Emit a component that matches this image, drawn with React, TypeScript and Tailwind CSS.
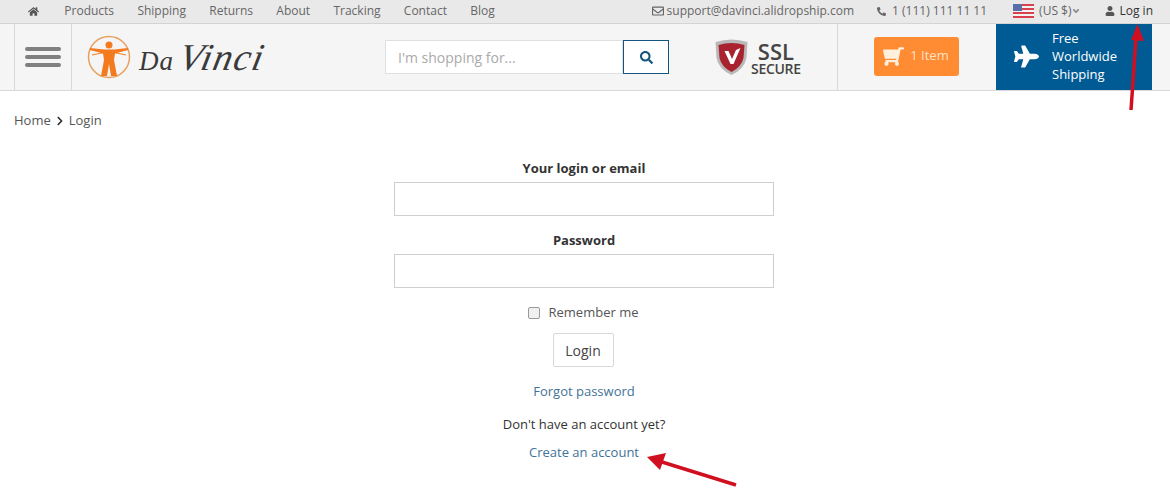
import { FaAngleDown, FaChevronRight, FaHome, FaPhone, FaPlane, FaRegEnvelope, FaSearch, FaShoppingCart, FaUser } from "react-icons/fa";

const navLinks = ["Products", "Shipping", "Returns", "About", "Tracking", "Contact", "Blog"];

function UsFlag() {
  return (
    <svg width="21" height="14" viewBox="0 0 21 14">
      <rect width="21" height="14" fill="#f3f3f3" />
      <rect width="21" height="2" fill="#d9414e" />
      <rect y="4" width="21" height="2" fill="#d9414e" />
      <rect y="8" width="21" height="2" fill="#d9414e" />
      <rect y="12" width="21" height="2" fill="#d9414e" />
      <rect width="9" height="7" fill="#5a6fa8" />
    </svg>
  );
}

function Vitruvian() {
  return (
    <svg width="44" height="44" viewBox="0 0 44 44">
      <circle cx="22" cy="22" r="20.5" fill="none" stroke="#e8a060" strokeWidth="1.5" />
      <path d="M3 13 L17 14.5 L27 14.5 L41 13 L41 15 L28 18.5 L27 25 L30 41 L24 41 L22 29 L20 41 L14 41 L17 25 L16 18.5 L3 15 Z" fill="#f47a1f" />
      <circle cx="22" cy="10" r="3.5" fill="#f47a1f" />
      <path d="M5 20 L17 17.5 M39 20 L27 17.5" stroke="#f47a1f" strokeWidth="1" />
    </svg>
  );
}

function Shield() {
  return (
    <svg width="37" height="38" viewBox="0 0 36 38">
      <path d="M2 4 Q18 -1 34 4 L33 20 Q31 31 18 37 Q5 31 3 20 Z" fill="#b9b9b9" />
      <path d="M5 7 Q18 3 31 7 L30 20 Q28 29 18 34 Q8 29 6 20 Z" fill="#a8232f" />
      <path d="M11 13 L17 26 L20 26 L27 10 L22.5 12 L18.5 21 L15 13 Z" fill="#ffffff" />
    </svg>
  );
}

function Arrows() {
  return (
    <svg className="absolute left-0 top-0 pointer-events-none" width="1170" height="503" viewBox="0 0 1170 503">
      <path d="M1131 110 L1136 38" stroke="#d01020" strokeWidth="3.5" fill="none" />
      <path d="M1137.5 24 L1144 41 L1131 40 Z" fill="#d01020" />
      <path d="M736 485 L662 462" stroke="#d01020" strokeWidth="3.5" fill="none" />
      <path d="M647 457 L666 453 L660 470 Z" fill="#d01020" />
    </svg>
  );
}

export default function App() {
  return (
    <div className="relative h-[503px] w-[1170px] overflow-hidden bg-white font-['Open_Sans',sans-serif] text-[13px] text-[#333]">
      <div className="flex h-6 items-center justify-between border-b border-[#d4d4d4] bg-[#e9e9e9] pb-px pl-[28px] pr-[17px] text-[12px] text-[#666]">
        <div className="flex items-center gap-[23.3px]">
          <FaHome className="mr-[2px] text-[11px] text-[#555]" />
          {navLinks.map((link) => (
            <a key={link} href="#">{link}</a>
          ))}
        </div>
        <div className="flex items-center">
          <FaRegEnvelope className="mr-[3px] text-[12px]" />
          <span>support@davinci.alidropship.com</span>
          <FaPhone className="ml-[23px] mr-[6px] text-[9px] -scale-x-100" />
          <span>1 (111) 111 11 11</span>
          <span className="ml-[26px] mr-[5px]"><UsFlag /></span>
          <span>(US $)</span>
          <FaAngleDown className="text-[10px] text-[#888]" />
          <FaUser className="ml-[24px] mr-[4px] text-[10px] text-[#555]" />
          <span className="text-[#333]">Log in</span>
        </div>
      </div>

      <header className="flex h-[67px] items-center border-b border-[#d8d8d8] bg-[#f5f5f5]">
        <div className="ml-[14px] flex h-full w-[58px] flex-col items-center justify-center gap-[4px] border-x border-[#d8d8d8]">
          <span className="h-[4px] w-[36px] rounded-full bg-[#808080]" />
          <span className="h-[4px] w-[36px] rounded-full bg-[#808080]" />
          <span className="h-[4px] w-[36px] rounded-full bg-[#808080]" />
        </div>
        <div className="ml-[15px] flex w-[298px] items-center">
          <Vitruvian />
          <span className="ml-[8px] whitespace-nowrap font-['Liberation_Serif',serif] italic leading-none text-[#3a3a3a]">
            <span className="text-[27px] tracking-[1px]">Da</span>
            <span className="ml-[6px] inline-block -skew-x-12 text-[38px] tracking-[1.5px]">Vinci</span>
          </span>
        </div>
        <div className="flex h-[34px] w-[284px]">
          <div className="flex flex-1 items-center border border-[#e0e0e0] bg-white pl-[12px] text-[14px] text-[#aaa]">I'm shopping for...</div>
          <button className="flex w-[46px] items-center justify-center border border-[#14557f] bg-white text-[13px] text-[#14557f]">
            <FaSearch />
          </button>
        </div>
        <div className="ml-[44px] flex w-[124px] items-center gap-[1px]">
          <Shield />
          <div className="flex flex-col items-center font-semibold text-[#444]">
            <span className="text-[22px] leading-[22px]">SSL</span>
            <span className="text-[14px] leading-[13px] tracking-[-0.3px]">SECURE</span>
          </div>
        </div>
        <div className="flex h-full w-[159px] items-center justify-center border-l border-[#d8d8d8] pb-[2px] pr-[2px]">
          <div className="flex h-[39px] w-[85px] items-center justify-center gap-[6px] rounded-[3px] bg-[#ff8c33] text-[13px] text-[#ffe2c4]">
            <FaShoppingCart className="-scale-x-100 text-[21px] text-[#fff0dd]" />
            <span>1 Item</span>
          </div>
        </div>
        <div className="flex h-full w-[156px] items-center bg-[#005b94] pb-[2px] pl-[18px] text-[13px] leading-[18px] text-white">
          <FaPlane className="text-[25px]" />
          <div className="ml-[13px]">Free<br />Worldwide<br />Shipping</div>
        </div>
      </header>

      <nav className="mt-[21px] flex h-[18px] items-center gap-[4px] pl-[14px] text-[13px] text-[#555]">
        <span>Home</span>
        <FaChevronRight className="text-[10px] text-[#333]" />
        <span>Login</span>
      </nav>

      <form className="ml-[394px] mt-[29px] flex w-[380px] flex-col items-center">
        <label className="h-[18px] text-[13px] font-bold leading-[18px]">Your login or email</label>
        <input className="mt-[5px] h-[34px] w-full border border-[#cfcfcf] bg-white" />
        <label className="mt-[15px] h-[18px] text-[13px] font-bold leading-[18px]">Password</label>
        <input className="mt-[5px] h-[34px] w-full border border-[#cfcfcf] bg-white" />
        <label className="-ml-[2px] mt-[16px] flex h-[18px] items-center gap-[9px] text-[13px] text-[#555]">
          <span className="h-[12px] w-[12px] rounded-[2px] border border-[#999] bg-[#f0f0f0]" />
          Remember me
        </label>
        <button type="button" className="-ml-[2px] mt-[11px] h-[34px] w-[61px] rounded-[2px] border border-[#d8d8d8] bg-white text-[14px] text-[#444]">Login</button>
        <a href="#" className="mt-[15px] h-[18px] leading-[18px] text-[#3f7396]">Forgot password</a>
        <p className="mt-[15px] h-[18px] leading-[18px]">Don't have an account yet?</p>
        <a href="#" className="mt-[10px] h-[18px] leading-[18px] text-[#3f7396]">Create an account</a>
      </form>

      <Arrows />
    </div>
  );
}
